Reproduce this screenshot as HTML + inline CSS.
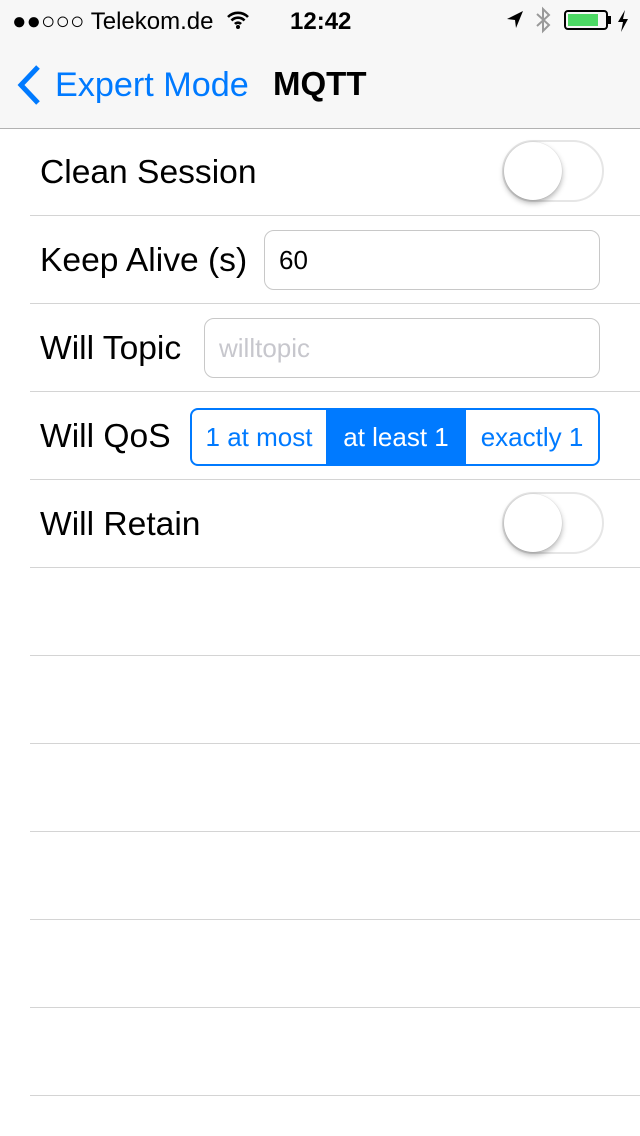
<!DOCTYPE html>
<html><head><meta charset="utf-8"><style>
*{margin:0;padding:0;box-sizing:border-box}
body{width:640px;height:1136px;background:#fff;font-family:"Liberation Sans",sans-serif;position:relative;overflow:hidden}
.abs{position:absolute}
.nav{left:0;top:0;width:640px;height:129px;background:#f7f7f7;border-bottom:1px solid #b2b2b2}
.sep{left:30px;width:610px;height:1px;background:#d4d4d4}
.lbl{left:40px;font-size:33.6px;color:#000;line-height:40px}
.sw{width:102px;height:62px;border-radius:31px;border:2px solid #e6e6e6;background:#fff}
.knob{width:58px;height:58px;border-radius:50%;background:#fff;box-shadow:0 3px 6px rgba(0,0,0,.3),0 0 1px rgba(0,0,0,.2);left:0;top:0}
.tf{border:1px solid #c8c8c8;border-radius:10px;height:60px;font-size:26px;line-height:58px;padding-left:14px}
</style></head><body>
<div class="abs nav"></div>
<div class="abs" style="left:12px;top:8px;font-size:24px;line-height:28px;color:#000">●●○○○ Telekom.de</div>
<svg class="abs" style="left:226px;top:10px" width="24" height="20" viewBox="0 0 24 20"><path d="M2 7a14 14 0 0 1 20 0M5.5 10.5a9 9 0 0 1 13 0M9 14a4 4 0 0 1 6 0" stroke="#000" stroke-width="2.6" fill="none"/><circle cx="12" cy="17" r="2" fill="#000"/></svg>
<div class="abs" style="left:290px;top:8px;font-size:24px;font-weight:bold;line-height:28px">12:42</div>
<svg class="abs" style="left:506px;top:10px" width="18" height="20" viewBox="0 0 18 20"><path d="M17 1L1 9l8 1 1 8z" fill="#000"/></svg>
<svg class="abs" style="left:534px;top:6px" width="18" height="28" viewBox="0 0 18 28"><path d="M3 8l12 11-6 6V3l6 6L3 20" stroke="#999" stroke-width="2" fill="none"/></svg>
<div class="abs" style="left:564px;top:10px;width:44px;height:20px;border:2px solid #000;border-radius:4px;padding:2px"><div style="width:30px;height:12px;background:#4cd964"></div></div>
<div class="abs" style="left:608px;top:16px;width:3px;height:8px;background:#000"></div>
<svg class="abs" style="left:617px;top:10px" width="12" height="22" viewBox="0 0 12 22"><path d="M8 0L1 12h5l-2 10 7-13H6z" fill="#000"/></svg>
<svg class="abs" style="left:14px;top:64px" width="30" height="42" viewBox="0 0 30 42"><path d="M24 3L7 21l17 18" stroke="#007aff" stroke-width="5" fill="none"/></svg>
<div class="abs" style="left:55px;top:65px;font-size:34.2px;line-height:40px;color:#007aff">Expert Mode</div>
<div class="abs" style="left:273px;top:64px;font-size:33px;font-weight:bold;line-height:40px">MQTT</div>

<div class="abs lbl" style="top:153px">Clean Session</div>
<div class="abs sw" style="left:502px;top:140px"><div class="abs knob"></div></div>
<div class="abs sep" style="top:215px"></div>
<div class="abs lbl" style="top:241px">Keep Alive (s)</div>
<div class="abs tf" style="left:264px;top:230px;width:336px">60</div>
<div class="abs sep" style="top:303px"></div>
<div class="abs lbl" style="top:329px">Will Topic</div>
<div class="abs tf" style="left:204px;top:318px;width:396px;color:#c7c7cd">willtopic</div>
<div class="abs sep" style="top:391px"></div>
<div class="abs lbl" style="top:417px">Will QoS</div>
<div class="abs" style="left:190px;top:408px;width:410px;height:58px;border:2px solid #007aff;border-radius:8px;overflow:hidden;display:flex;font-size:26px;line-height:54px;color:#007aff;text-align:center">
<div style="width:134px">1 at most</div><div style="width:140px;background:#007aff;color:#fff">at least 1</div><div style="flex:1">exactly 1</div></div>
<div class="abs sep" style="top:479px"></div>
<div class="abs lbl" style="top:505px">Will Retain</div>
<div class="abs sw" style="left:502px;top:492px"><div class="abs knob"></div></div>
<div class="abs sep" style="top:567px"></div>
<div class="abs sep" style="top:655px"></div>
<div class="abs sep" style="top:743px"></div>
<div class="abs sep" style="top:831px"></div>
<div class="abs sep" style="top:919px"></div>
<div class="abs sep" style="top:1007px"></div>
<div class="abs sep" style="top:1095px"></div>
</body></html>
